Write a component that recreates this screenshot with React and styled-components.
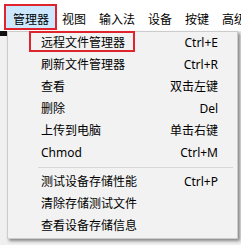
import React from "react";
import styled, { createGlobalStyle } from "styled-components";

const GlobalStyle = createGlobalStyle`
  html, body {
    margin: 0;
    padding: 0;
    background: #f0f0f0;
  }
  body {
    font-family: "Noto Sans", "Noto Sans CJK SC", sans-serif;
    font-size: 12px;
    color: #000;
  }
`;

const barItems = ["管理器", "视图", "输入法", "设备", "按键", "高级"];

const menuGroups = [
  [
    { label: "远程文件管理器", key: "Ctrl+E", marked: true },
    { label: "刷新文件管理器", key: "Ctrl+R" },
    { label: "查看", key: "双击左键" },
    { label: "删除", key: "Del" },
    { label: "上传到电脑", key: "单击右键" },
    { label: "Chmod", key: "Ctrl+M" },
  ],
  [
    { label: "测试设备存储性能", key: "Ctrl+P" },
    { label: "清除存储测试文件" },
    { label: "查看设备存储信息" },
  ],
];

function App() {
  return (
    <>
      <GlobalStyle />
      <Window>
        <MenuBar>
          {barItems.map((name, i) => (
            <BarItem key={name} $open={i === 0}>
              {name}
            </BarItem>
          ))}
        </MenuBar>
        <Body>
          <Strip />
          <Dropdown>
            {menuGroups.map((group, gi) => (
              <React.Fragment key={gi}>
                {gi > 0 && <Separator />}
                {group.map((item) => (
                  <Row key={item.label}>
                    <Label $marked={item.marked}>{item.label}</Label>
                    <Shortcut>{item.key}</Shortcut>
                  </Row>
                ))}
              </React.Fragment>
            ))}
          </Dropdown>
        </Body>
      </Window>
    </>
  );
}

export default App;

const Window = styled.div`
  width: 241px;
  height: 245px;
  overflow: hidden;
  display: flex;
  flex-direction: column;
  background: #f0f0f0;
`;

const MenuBar = styled.div`
  height: 31px;
  flex-shrink: 0;
  background: #fff;
  display: flex;
  align-items: flex-end;
  padding: 0 0 3px 6px;
  box-sizing: border-box;
  white-space: nowrap;
`;

const BarItem = styled.div`
  position: relative;
  height: 22px;
  box-sizing: border-box;
  padding: 3px 6px 0 7px;
  display: flex;
  align-items: center;
  font-family: "Noto Sans CJK SC", sans-serif;
  font-size: 12px;
  line-height: 1;
  background: ${(p) => (p.$open ? "#cce8ff" : "transparent")};

  &::after {
    content: ${(p) => (p.$open ? '""' : "none")};
    position: absolute;
    left: -2px;
    right: -2px;
    top: -2px;
    bottom: -2px;
    border: 2px solid #e0242e;
  }
`;

const Body = styled.div`
  position: relative;
  flex: 1;
  background: #f0f0f0;
`;

const Strip = styled.div`
  height: 5px;
  width: 7px;
  background: #111;
`;

const Dropdown = styled.div`
  position: absolute;
  left: 7px;
  top: 0;
  width: 231px;
  box-sizing: border-box;
  background: #f2f2f2;
  border: 1px solid #cccccc;
  box-shadow: 2px 2px 3px rgba(0, 0, 0, 0.45);
  padding: 0 0 1px;
  display: flex;
  flex-direction: column;
`;

const Row = styled.div`
  height: 22px;
  display: grid;
  grid-template-columns: 1fr auto;
  align-items: center;
  padding: 0 19px 0 33px;
  line-height: 1;
`;

const Label = styled.span`
  position: relative;
  font-family: "Noto Sans", "Noto Sans CJK SC", sans-serif;

  &::after {
    content: ${(p) => (p.$marked ? '""' : "none")};
    position: absolute;
    left: -12px;
    width: 106px;
    top: -6px;
    height: 21px;
    box-sizing: border-box;
    border: 2px solid #e0242e;
  }
`;

const Shortcut = styled.span`
  text-align: right;
  font-family: "Noto Sans", "Noto Sans CJK SC", sans-serif;
`;

const Separator = styled.div`
  height: 1px;
  background: #d7d7d7;
  margin: 3px 4px 3px 30px;
`;
